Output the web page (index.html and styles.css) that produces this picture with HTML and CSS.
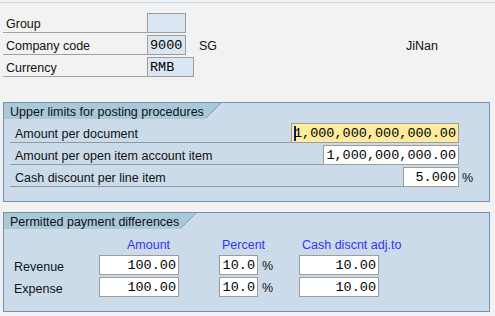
FILE: index.html
```html
<!DOCTYPE html>
<html lang="en">
  <head>
    <meta charset="UTF-8" />
    <title>Company code settings</title>
    <link rel="stylesheet" href="styles.css">
  </head>
  <body>
    <div class="topline"></div>

    <!-- header fields -->
    <div class="head">
      <div class="hrow">
        <span class="hlabel">Group</span>
        <span class="field ro w39"></span>
      </div>
      <div class="hrow">
        <span class="hlabel">Company code</span>
        <span class="field ro w39">9000</span>
        <span class="sg">SG</span>
        <span class="city">JiNan</span>
      </div>
      <div class="hrow">
        <span class="hlabel">Currency</span>
        <span class="field ro w47">RMB</span>
      </div>
    </div>

    <!-- Upper limits -->
    <div class="group g1">
      <div class="tab">
        <span class="tab-text">Upper limits for posting procedures</span>
        <span class="tab-corner"></span>
      </div>
      <div class="frow">
        <span class="flabel">Amount per document</span>
        <span class="field num focus w168"><span class="cursor">1</span>,000,000,000,000.00</span>
        <span class="unit"></span>
      </div>
      <div class="frow">
        <span class="flabel">Amount per open item account item</span>
        <span class="field num w136">1,000,000,000.00</span>
        <span class="unit"></span>
      </div>
      <div class="frow">
        <span class="flabel">Cash discount per line item</span>
        <span class="field num w56">5.000</span>
        <span class="unit">%</span>
      </div>
    </div>

    <!-- Permitted payment differences -->
    <div class="group g2">
      <div class="tab">
        <span class="tab-text">Permitted payment differences</span>
        <span class="tab-corner"></span>
      </div>
      <div class="diff-grid">
        <span></span>
        <span class="colhead amount">Amount</span>
        <span class="colhead">Percent</span>
        <span class="colhead">Cash discnt adj.to</span>

        <span class="rlabel">Revenue</span>
        <span class="cell"><span class="field num w80">100.00</span></span>
        <span class="cell"><span class="field num w39">10.0</span><span class="pct">%</span></span>
        <span class="cell"><span class="field num w80">10.00</span></span>

        <span class="rlabel">Expense</span>
        <span class="cell"><span class="field num w80">100.00</span></span>
        <span class="cell"><span class="field num w39">10.0</span><span class="pct">%</span></span>
        <span class="cell"><span class="field num w80">10.00</span></span>
      </div>
    </div>
  </body>
</html>
```

FILE: styles.css
```css
body {
  margin: 0;
  background: #f2f2f2;
  font-family: "Liberation Sans", Arial, sans-serif;
  font-size: 12.5px;
  color: #111;
}

.topline {
  height: 1px;
  margin-top: 2px;
  background: #c4dbee;
}

/* header fields */
.head {
  padding-top: 8px;
}

.hrow {
  display: flex;
  align-items: flex-end;
  height: 22px;
}

.hlabel {
  width: 144px;
  height: 22px;
  margin-left: 3px;
  padding: 5px 0 0 3px;
  box-sizing: border-box;
  line-height: 17px;
  border-bottom: 1px solid #a0a0a0;
}

.field {
  display: block;
  height: 20px;
  box-sizing: border-box;
  border: 1px solid #9c9c9c;
  background: #fff;
  font-family: "Liberation Mono", "DejaVu Sans Mono", monospace;
  font-size: 13.5px;
  line-height: 19px;
  white-space: nowrap;
  color: #000;
}

.field.ro {
  background: #dbe6f3;
  padding-left: 2px;
}

.field.num {
  text-align: right;
  padding-right: 2px;
}

.field.focus {
  background: #fdeb9f;
}

.cursor {
  box-shadow: inset 2px 0 #0c1f6e;
}

.w39 { width: 39px; }
.w47 { width: 47px; }
.w56 { width: 56px; }
.w80 { width: 80px; }
.w136 { width: 136px; }
.w168 { width: 168px; }

.sg {
  width: 207px;
  margin-left: 13px;
  line-height: 18px;
}

.city {
  line-height: 18px;
}

/* group boxes */
.group {
  margin: 0 5px 0 3px;
  border: 1px solid #6f91b4;
  background: #cbdbea;
  padding-bottom: 14px;
}

.g1 {
  margin-top: 25px;
}

.g2 {
  margin-top: 10px;
}

.tab {
  display: flex;
  height: 16px;
}

.tab-text {
  height: 16px;
  background: #a9c8d8;
  padding: 0 2px 0 6px;
  line-height: 19px;
  white-space: nowrap;
}

.tab-corner {
  width: 16px;
  background: linear-gradient(to bottom right, #a9c8d8 calc(50% - 1px), #7f9fbf calc(50% - 1px), #7f9fbf 50%, transparent 50%);
}

.frow {
  display: flex;
  align-items: flex-end;
  height: 22px;
  padding-left: 6px;
}

.g1 .tab + .frow {
  margin-top: 2px;
}

.flabel {
  flex: 1;
  height: 22px;
  box-sizing: border-box;
  padding: 5px 0 0 5px;
  line-height: 16px;
  border-bottom: 1px solid #8c99a5;
  white-space: nowrap;
}

.unit {
  width: 27px;
  padding-left: 3px;
  line-height: 17px;
}

/* payment differences */
.diff-grid {
  display: grid;
  grid-template-columns: 95px 120px 80px 80px;
  grid-template-rows: 19px 20px 20px;
  row-gap: 2px;
  margin-top: 5px;
}

.colhead {
  color: #3434f4;
  line-height: 22px;
  padding-left: 3px;
  white-space: nowrap;
}

.colhead.amount {
  padding-left: 28px;
}

.rlabel {
  padding-left: 10px;
  line-height: 24px;
}

.cell {
  display: flex;
}

.pct {
  margin-left: 4px;
  line-height: 22px;
}
```
